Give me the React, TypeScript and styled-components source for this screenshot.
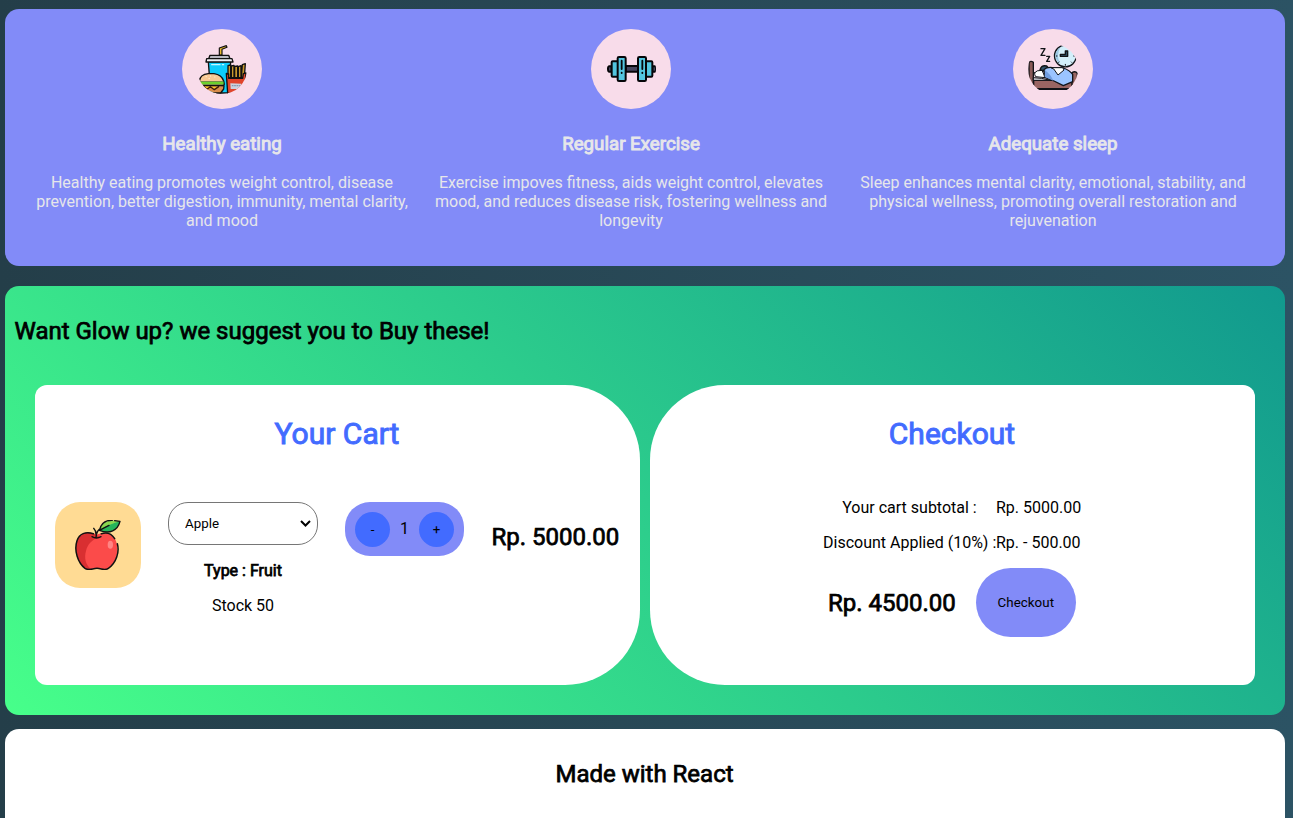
import React, { useState } from "react";
import styled, { createGlobalStyle, css } from "styled-components";

const GlobalStyle = createGlobalStyle`
  * { box-sizing: border-box; }
  body {
    margin: 0;
    height: 818px;
    overflow: hidden;
    font-family: Roboto, sans-serif;
    background: linear-gradient(to right, #243e49, #2c5364);
  }
  h1, h2, h3, p { margin: 0; font-weight: 400; }
`;

const heavy = css<{ $stroke?: number }>`
  -webkit-text-stroke: ${(p) => p.$stroke ?? 0.75}px currentColor;
`;

const Page = styled.main`
  width: 1280px;
  margin-left: 5px;
  padding-top: 9px;
  display: flex;
  flex-direction: column;
`;

const Benefits = styled.section`
  height: 257px;
  padding: 20px 0 0 27px;
  display: flex;
  border-radius: 14px;
  background: #828bf8;
  color: #e6e6ea;
`;

const Benefit = styled.article<{ $width: number; $gap: number }>`
  width: ${(p) => p.$width}px;
  margin-right: ${(p) => p.$gap}px;
  display: flex;
  flex-direction: column;
  align-items: center;
  text-align: center;
`;

const IconDisc = styled.div`
  width: 80px;
  height: 80px;
  padding: 15px;
  border-radius: 50%;
  background: #f8dcea;
  svg { display: block; border-radius: 50%; }
`;

const BenefitTitle = styled.h3`
  ${heavy}
  margin: 24px 0 18px;
  font-size: 18.72px;
  line-height: 22px;
`;

const BenefitText = styled.p`
  font-size: 16px;
  line-height: 19px;
`;

const Shop = styled.section`
  height: 429px;
  margin-top: 20px;
  padding: 31px 30px 30px;
  border-radius: 14px;
  background: linear-gradient(45deg, #47ff8a, #11998e);
`;

const Heading = styled.h2`
  ${heavy}
  font-size: 24px;
  line-height: 28px;
`;

const ShopHeading = styled(Heading)`
  margin: 0 0 40px -20.5px;
`;

const Cards = styled.div`
  display: grid;
  grid-template-columns: 1fr 1fr;
  gap: 10px;
`;

const Card = styled.div<{ $side: "left" | "right" }>`
  height: 300px;
  padding: 31px 20px 0;
  background: #fff;
  border-radius: ${(p) => (p.$side === "left" ? "12px 75px 75px 12px" : "75px 12px 12px 75px")};
`;

const CardTitle = styled.h1`
  ${heavy}
  font-size: 30px;
  line-height: 36px;
  text-align: center;
  margin-right: 1px;
  color: #426bff;
`;

const CartRow = styled.div`
  margin-top: 50px;
  display: flex;
  align-items: flex-start;
`;

const Thumb = styled.div`
  width: 86px;
  height: 86px;
  padding: 18px;
  border-radius: 25px;
  background: #ffdb94;
  svg { display: block; }
`;

const Product = styled.div`
  width: 150px;
  margin: 0 27px;
  text-align: center;
`;

const SelectBox = styled.div`
  position: relative;
  svg {
    position: absolute;
    right: 7px;
    top: 17px;
    pointer-events: none;
  }
`;

const Select = styled.select`
  appearance: none;
  display: block;
  width: 150px;
  height: 43px;
  padding: 0 16px;
  border: 1px solid #767676;
  border-radius: 20px;
  background: #fff;
  color: #000;
  font: 13.333px Roboto, sans-serif;
`;

const Kind = styled.p`
  ${heavy}
  margin-top: 16px;
  line-height: 19px;
`;

const Stock = styled.p`
  margin-top: 16px;
  line-height: 19px;
`;

const Counter = styled.div`
  width: 119px;
  height: 54px;
  padding: 10px;
  display: flex;
  align-items: center;
  justify-content: space-between;
  border-radius: 25px;
  background: #828bf8;
`;

const Quantity = styled.span`
  padding-bottom: 2px;
`;

const Step = styled.button`
  width: 35px;
  height: 35px;
  padding: 0;
  border: 0;
  border-radius: 50%;
  background: #426bff;
  color: #000;
  font: 13.333px Roboto, sans-serif;
`;

const Price = styled(Heading)`
  margin: 21px 0 0 27.5px;
  white-space: nowrap;
`;

const Summary = styled.div`
  width: 258px;
  margin: 46px 0 0 153px;
`;

const SummaryLine = styled.div`
  display: grid;
  grid-template-columns: 173px 85px;
  height: 35px;
  line-height: 19px;
  white-space: nowrap;
`;

const Label = styled.span<{ $center?: boolean }>`
  text-align: ${(p) => (p.$center ? "center" : "left")};
`;

const Total = styled.div`
  display: flex;
  align-items: center;
  gap: 20px;
  padding-left: 5px;
`;

const CheckoutButton = styled.button`
  width: 100px;
  height: 69px;
  padding: 0;
  border: 0;
  border-radius: 35px;
  background: #828bf8;
  color: #000;
  font: 13.333px Roboto, sans-serif;
  letter-spacing: 0.05px;
`;

const Footer = styled.footer`
  height: 120px;
  margin-top: 14px;
  padding: 31px 1px 0 0;
  border-radius: 14px;
  background: #fff;
  text-align: center;
`;

const FoodIcon = () => (
  <svg width="50" height="50" viewBox="75 72 150 150" stroke="#111" strokeWidth="4" strokeLinejoin="round" strokeLinecap="round">
    <path d="M142 105V84l21-7 2 5-15 6v17z" fill="#e8b92e" strokeWidth="3.5" />
    <path d="M109 125h67l-7 94h-53z" fill="#0dcdfb" />
    <path d="M119 134h25M151 134h4" stroke="#c5f7ff" fill="none" />
    <path d="M114 106h56l4 10h-64z" fill="#b9b9c2" />
    <path d="M104 116h76l3 10h-81z" fill="#f0f0f4" />
    <path d="M168 137l8-2v38h-8zM178 138l8-2v37h-8zM188 139l9-1v35h-9zM199 140l8-3v36h-8zM211 134l9-3-3 41h-9z" fill="#c99a2e" />
    <path d="M163 160l7 2v13h42l2-14 8-2-5 61h-50z" fill="#e0452b" />
    <path d="M175 190l33 1-3 16h-29z" fill="#ccd4df" stroke="none" />
    <path d="M181 197h22" stroke="#8a99ad" strokeDasharray="2 5" />
    <path d="M84 197q35-5 72 0l-1 10-9 12h-47l-13-10z" fill="#d98d4c" />
    <path d="M94 199l11 9 10-8 12 9 13-9" fill="#ffca28" stroke="#3b1b0b" />
    <path d="M82 184q2-21 27-23h17q23 3 29 22l2 10-5 4H86z" fill="#f8c994" />
    <path d="M84 185h71v8H85z" fill="#74e02f" stroke="#286323" strokeWidth="2" />
    <path d="M102 170h1M115 168h1M128 171h1M111 176h1" stroke="#fff1d9" strokeWidth="3" />
  </svg>
);

const DumbbellIcon = () => (
  <svg width="50" height="50" viewBox="75 72 150 150" stroke="#060609" strokeWidth="6" strokeLinejoin="round" strokeLinecap="round">
    <path d="M134 138h37v17h-37z" fill="#45455e" />
    <path d="M92 139h-7q-4 0-4 8t4 8h7zM214 139h7q4 0 4 8t-4 8h-7z" fill="#45455e" />
    <rect x="92" y="124" width="20" height="46" rx="3" fill="#52c5df" />
    <rect x="194" y="124" width="20" height="46" rx="3" fill="#52c5df" />
    <rect x="110" y="111" width="24" height="72" rx="4" fill="#52c5df" />
    <rect x="171" y="111" width="24" height="72" rx="4" fill="#52c5df" />
    <path d="M122 122v25M122 158v1M184 122v25M184 158v1" fill="none" strokeWidth="5.5" />
  </svg>
);

const SleepIcon = () => (
  <svg width="50" height="50" viewBox="75 72 150 150" stroke="#111318" strokeWidth="4" strokeLinejoin="round" strokeLinecap="round">
    <path d="M114 86h12l-12 20h12M131 109h9l-9 15h9" fill="none" />
    <circle cx="187" cy="108" r="32.5" fill="#d3effb" />
    <path d="M172 82q-14 25 0 50-16-12-15-26t15-24z" fill="#9cc8e4" stroke="none" />
    <path d="M160 108h2M212 108h3M187 133v3M205 90l1-1M205 126l1 1M168 126l-1 1" fill="none" strokeWidth="3" />
    <path d="M187 93h7v16h-22v-6h15z" fill="#2b4c60" />
    <path d="M78 127q6-6 13 0v81H78z" fill="#895a58" />
    <path d="M92 181h116v27H92z" fill="#9a6563" />
    <path d="M207 158q10-6 16 2v48h-16z" fill="#9a6563" />
    <path d="M92 173l23 2 28 6H92z" fill="#d8d8df" strokeWidth="3" />
    <path d="M95 158q5-8 22-7l10 22-29-3q-4-5-3-12z" fill="#fff" strokeWidth="3" />
    <path d="M111 149q5-15 20-11l8 9-17 6z" fill="#31536c" />
    <path d="M123 149q9-10 33-5l26 0q19 8 27 19v22l-28 12-28-14-28-11z" fill="#9bc4ff" />
    <path d="M126 151q16 11 25 31l-26-11z" fill="#719de0" stroke="none" />
    <path d="M145 143l34 0 4 7-18 15-12-17z" fill="#fff" strokeWidth="3" />
    <path d="M92 206h130" fill="none" />
  </svg>
);

const AppleIcon = () => (
  <svg width="50" height="50" viewBox="84 90 150 150" strokeLinejoin="round" strokeLinecap="round">
    <path d="M155 134c-24-12-50-5-59 18-10 30 3 67 24 83 13 8 22 0 36 0s22 8 34 0c24-16 33-54 24-79-8-25-35-33-59-22z" fill="#fb4b4a" />
    <path d="M149 132c-23-9-45-3-53 20-10 30 3 67 24 83 6 4 12 4 17 2-15-13-20-33-14-54 4-18 16-35 42-43z" fill="#d92f31" />
    <path d="M145 131c-23-7-42 0-49 21-10 30 3 67 24 83 13 8 22 0 36 0s22 8 34 0c24-16 34-50 27-74M209 146c-9-15-24-20-40-15" fill="none" stroke="#111" strokeWidth="4.5" />
    <ellipse cx="196" cy="164" rx="8" ry="12" fill="#ff8584" />
    <path d="M163 121c5-22 25-33 62-27-7 28-31 39-62 27z" fill="#26b55b" />
    <path d="M163 121c5-22 25-33 62-27-19 6-41 12-62 27z" fill="#8bd850" />
    <path d="M163 121c5-22 19-31 39-30M209 92l16 2c-7 28-31 39-62 27l29-15" fill="none" stroke="#111" strokeWidth="4" />
    <path d="M153 143c1-14 3-20 10-25M146 115q7 7 7 18M141 140q14 8 27 0" fill="none" stroke="#111" strokeWidth="4" />
  </svg>
);

const benefits = [
  { title: "Healthy eating", width: 380, gap: 19, Icon: FoodIcon, text: "Healthy eating promotes weight control, disease prevention, better digestion, immunity, mental clarity, and mood" },
  { title: "Regular Exercise", width: 400, gap: 25, Icon: DumbbellIcon, text: "Exercise impoves fitness, aids weight control, elevates mood, and reduces disease risk, fostering wellness and longevity" },
  { title: "Adequate sleep", width: 394, gap: 0, Icon: SleepIcon, text: "Sleep enhances mental clarity, emotional, stability, and physical wellness, promoting overall restoration and rejuvenation" },
];

const UNIT_PRICE = 5000;

export default function App() {
  const [count, setCount] = useState(1);
  const subtotal = UNIT_PRICE * count;
  return (
    <>
      <GlobalStyle />
      <Page>
        <Benefits>
          {benefits.map(({ title, width, gap, Icon, text }) => (
            <Benefit key={title} $width={width} $gap={gap}>
              <IconDisc><Icon /></IconDisc>
              <BenefitTitle $stroke={0.9}>{title}</BenefitTitle>
              <BenefitText>{text}</BenefitText>
            </Benefit>
          ))}
        </Benefits>
        <Shop>
          <ShopHeading>Want Glow up? we suggest you to Buy these!</ShopHeading>
          <Cards>
            <Card $side="left">
              <CardTitle $stroke={0.9}>Your Cart</CardTitle>
              <CartRow>
                <Thumb><AppleIcon /></Thumb>
                <Product>
                  <SelectBox>
                    <Select><option>Apple</option></Select>
                    <svg width="11" height="9" viewBox="0 0 11 9" fill="none" stroke="#000" strokeWidth="2">
                      <path d="M1 2l4.5 4.5L10 2" />
                    </svg>
                  </SelectBox>
                  <Kind>Type : Fruit</Kind>
                  <Stock>Stock 50</Stock>
                </Product>
                <Counter>
                  <Step onClick={() => setCount(Math.max(1, count - 1))}>-</Step>
                  <Quantity>{count}</Quantity>
                  <Step onClick={() => setCount(count + 1)}>+</Step>
                </Counter>
                <Price>Rp. {subtotal.toFixed(2)}</Price>
              </CartRow>
            </Card>
            <Card $side="right">
              <CardTitle $stroke={0.9}>Checkout</CardTitle>
              <Summary>
                <SummaryLine><Label $center>Your cart subtotal :</Label><span>Rp. {subtotal.toFixed(2)}</span></SummaryLine>
                <SummaryLine><Label>Discount Applied (10%) :</Label><span>Rp. - {(subtotal * 0.1).toFixed(2)}</span></SummaryLine>
                <Total>
                  <Heading>Rp. {(subtotal * 0.9).toFixed(2)}</Heading>
                  <CheckoutButton>Checkout</CheckoutButton>
                </Total>
              </Summary>
            </Card>
          </Cards>
        </Shop>
        <Footer><Heading>Made with React</Heading></Footer>
      </Page>
    </>
  );
}
